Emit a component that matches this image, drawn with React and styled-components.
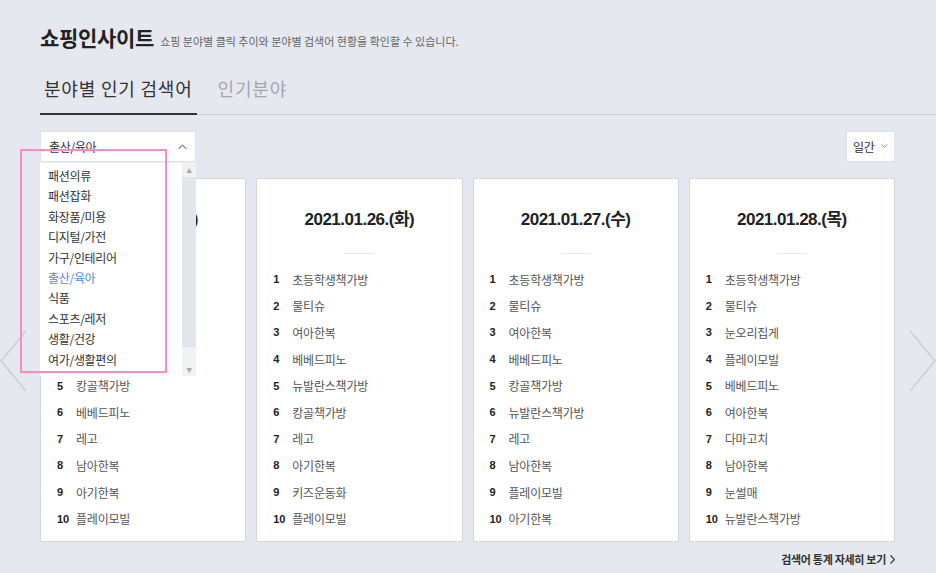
import React from "react";
import styled, { createGlobalStyle } from "styled-components";

const GlobalStyle = createGlobalStyle`
  html, body {
    margin: 0;
    padding: 0;
    background: #e5e8ef;
    font-family: "Noto Sans CJK KR", "Noto Sans", sans-serif;
    color: #333;
  }
  body {
    width: 936px;
    height: 573px;
    overflow: hidden;
    position: relative;
  }
`;

const Page = styled.div`
  position: relative;
  width: 855px;
  padding: 22px 0 0 40px;
`;

const Header = styled.div`
  display: flex;
  align-items: baseline;
  gap: 6px;
`;

const Title = styled.h1`
  margin: 0;
  font-size: 21px;
  font-weight: 700;
  color: #222;
  letter-spacing: -0.3px;
`;

const Subtitle = styled.span`
  font-size: 11px;
  color: #666;
`;

const Tabs = styled.div`
  display: flex;
  margin-top: 23px;
  margin-right: -41px;
  border-bottom: 1px solid #c9cdd5;
`;

const Tab = styled.div`
  padding: 0 4px 12px 4px;
  margin-right: 17px;
  font-size: 18px;
  letter-spacing: 0.8px;
  white-space: nowrap;
  color: ${(p) => (p.$active ? "#333" : "#a3a6ab")};
  border-bottom: 2px solid ${(p) => (p.$active ? "#333" : "transparent")};
  margin-bottom: -1px;
`;

const Toolbar = styled.div`
  display: flex;
  justify-content: space-between;
  margin-top: 16px;
`;

const SelectBox = styled.div`
  position: relative;
  box-sizing: border-box;
  width: ${(p) => p.$width}px;
  height: 31px;
  padding: 0 ${(p) => (p.$compact ? 6 : 8)}px;
  display: flex;
  align-items: center;
  justify-content: space-between;
  gap: 3px;
  white-space: nowrap;
  background: #fff;
  border: 1px solid #dde1e8;
  font-size: 12px;
  color: #333;
  letter-spacing: -0.3px;
`;

const OptionList = styled.ul`
  position: absolute;
  left: -1px;
  top: 30px;
  z-index: 5;
  box-sizing: border-box;
  width: 156px;
  height: 214px;
  margin: 0;
  padding: 3px 0 0 0;
  list-style: none;
  background: #fff;
  border-top: 1px solid #eceef2;
`;

const Option = styled.li`
  height: 20.4px;
  line-height: 20.4px;
  padding-left: 8px;
  font-size: 12px;
  color: ${(p) => (p.$selected ? "#4b8fe2" : "#333")};
  letter-spacing: -0.3px;
`;

const Scrollbar = styled.div`
  position: absolute;
  right: 0;
  top: 0;
  bottom: 0;
  width: 14px;
  background: #f1f2f4;
  display: flex;
  flex-direction: column;
  align-items: center;
`;

const ScrollArrow = styled.div`
  height: 14px;
  display: flex;
  align-items: center;
  justify-content: center;
  color: #a7a9ad;
  font-size: 6px;
`;

const ScrollThumb = styled.div`
  width: 14px;
  flex: 0 0 170px;
  background: #e2e5ea;
`;

const ScrollSpacer = styled.div`
  flex: 1;
`;

const Cards = styled.div`
  display: grid;
  grid-template-columns: repeat(4, 1fr);
  gap: 10px;
  margin-top: 16px;
`;

const Card = styled.div`
  box-sizing: border-box;
  height: 364px;
  background: #fff;
  border: 1px solid #d3d8e1;
  padding: 28px 16px 0 16px;
`;

const CardDate = styled.h2`
  margin: 0;
  text-align: center;
  font-family: "Liberation Sans", "Noto Sans CJK KR", sans-serif;
  font-size: 17px;
  font-weight: 700;
  color: #222;
  letter-spacing: -0.5px;
  line-height: 26px;
`;

const Divider = styled.div`
  width: 30px;
  height: 1px;
  margin: 20px auto 12px auto;
  background: #e3e7ee;
`;

const RankList = styled.ol`
  margin: 0;
  padding: 0;
  list-style: none;
`;

const RankItem = styled.li`
  display: flex;
  align-items: center;
  height: 26.6px;
`;

const RankNum = styled.span`
  width: 19px;
  font-family: "Liberation Sans", sans-serif;
  font-size: 11px;
  font-weight: 700;
  color: #222;
`;

const RankText = styled.span`
  font-size: 12px;
  color: #555;
  letter-spacing: -0.2px;
`;

const Footer = styled.div`
  display: flex;
  justify-content: flex-end;
  align-items: center;
  gap: 4px;
  margin-top: 9px;
  font-size: 11px;
  font-weight: 700;
  color: #333;
  letter-spacing: -0.3px;
`;

const Highlight = styled.div`
  position: absolute;
  left: 20px;
  top: 149px;
  width: 147px;
  height: 224px;
  box-sizing: border-box;
  border: 2px solid #f78bc5;
  z-index: 6;
  pointer-events: none;
`;

const SideArrow = styled.svg`
  position: absolute;
  top: 330px;
  ${(p) => (p.$side === "left" ? "left: 0;" : "right: 0;")}
`;

const categories = [
  "패션의류",
  "패션잡화",
  "화장품/미용",
  "디지털/가전",
  "가구/인테리어",
  "출산/육아",
  "식품",
  "스포츠/레저",
  "생활/건강",
  "여가/생활편의",
];

const days = [
  {
    date: "2021.01.25.(월)",
    items: ["초등학생책가방", "물티슈", "여아한복", "뉴발란스책가방", "캉골책가방", "베베드피노", "레고", "남아한복", "아기한복", "플레이모빌"],
  },
  {
    date: "2021.01.26.(화)",
    items: ["초등학생책가방", "물티슈", "여아한복", "베베드피노", "뉴발란스책가방", "캉골책가방", "레고", "아기한복", "키즈운동화", "플레이모빌"],
  },
  {
    date: "2021.01.27.(수)",
    items: ["초등학생책가방", "물티슈", "여아한복", "베베드피노", "캉골책가방", "뉴발란스책가방", "레고", "남아한복", "플레이모빌", "아기한복"],
  },
  {
    date: "2021.01.28.(목)",
    items: ["초등학생책가방", "물티슈", "눈오리집게", "플레이모빌", "베베드피노", "여아한복", "다마고치", "남아한복", "눈썰매", "뉴발란스책가방"],
  },
];

const Chevron = ({ dir = "down", size = 8, color = "#777" }) => (
  <svg width={size} height={size / 2 + 1} viewBox="0 0 8 5">
    <path
      d={dir === "down" ? "M0.5 0.5 L4 4 L7.5 0.5" : "M0.5 4.5 L4 1 L7.5 4.5"}
      fill="none"
      stroke={color}
      strokeWidth="1"
    />
  </svg>
);

export default function App() {
  return (
    <>
      <GlobalStyle />
      <Page>
        <Header>
          <Title>쇼핑인사이트</Title>
          <Subtitle>쇼핑 분야별 클릭 추이와 분야별 검색어 현황을 확인할 수 있습니다.</Subtitle>
        </Header>
        <Tabs>
          <Tab $active>분야별 인기 검색어</Tab>
          <Tab>인기분야</Tab>
        </Tabs>
        <Toolbar>
          <SelectBox $width={156}>
            <span>출산/육아</span>
            <Chevron dir="up" size={9} color="#888" />
            <OptionList>
              {categories.map((c) => (
                <Option key={c} $selected={c === "출산/육아"}>
                  {c}
                </Option>
              ))}
              <Scrollbar>
                <ScrollArrow>▲</ScrollArrow>
                <ScrollThumb />
                <ScrollSpacer />
                <ScrollArrow>▼</ScrollArrow>
              </Scrollbar>
            </OptionList>
          </SelectBox>
          <SelectBox $width={49} $compact>
            <span>일간</span>
            <Chevron size={7} color="#888" />
          </SelectBox>
        </Toolbar>
        <Cards>
          {days.map((d) => (
            <Card key={d.date}>
              <CardDate>{d.date}</CardDate>
              <Divider />
              <RankList>
                {d.items.map((it, i) => (
                  <RankItem key={i}>
                    <RankNum>{i + 1}</RankNum>
                    <RankText>{it}</RankText>
                  </RankItem>
                ))}
              </RankList>
            </Card>
          ))}
        </Cards>
        <Footer>
          <span>검색어 통계 자세히 보기</span>
          <svg width="5" height="9" viewBox="0 0 5 9">
            <path d="M0.5 0.5 L4.5 4.5 L0.5 8.5" fill="none" stroke="#333" strokeWidth="1.2" />
          </svg>
        </Footer>
        <Highlight />
      </Page>
      <SideArrow $side="left" width="28" height="62" viewBox="0 0 28 62">
        <path d="M26 1 L1 31 L26 61" fill="none" stroke="#c9cdd4" strokeWidth="1.5" />
      </SideArrow>
      <SideArrow $side="right" width="28" height="62" viewBox="0 0 28 62">
        <path d="M2 1 L27 31 L2 61" fill="none" stroke="#c9cdd4" strokeWidth="1.5" />
      </SideArrow>
    </>
  );
}
